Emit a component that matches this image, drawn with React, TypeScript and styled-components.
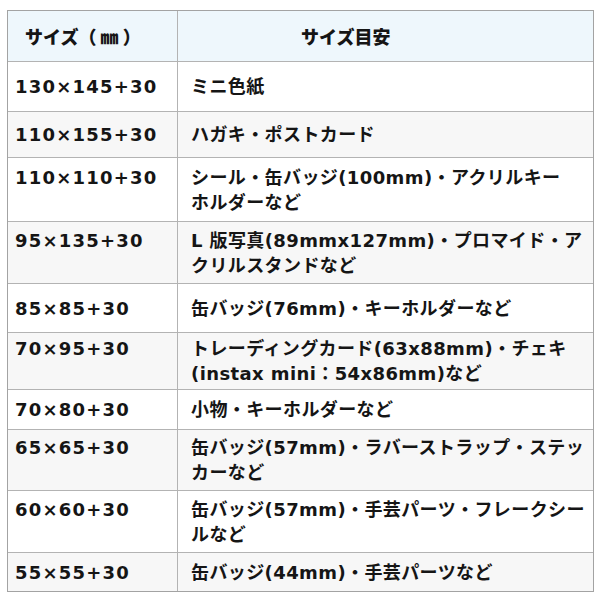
import styled, { createGlobalStyle } from "styled-components";

const GlobalStyle = createGlobalStyle`
  html, body {
    margin: 0;
    padding: 0;
    background: #ffffff;
  }
  body {
    font-family: "DejaVu Sans", "Noto Sans CJK JP", sans-serif;
    color: #151515;
  }
`;

const Page = styled.div`
  padding: 10px 6px 0 7px;
`;

const Table = styled.div`
  width: 587px;
  border: 1px solid #a3a3a3;
  box-sizing: border-box;
  display: flex;
  flex-direction: column;
`;

const Row = styled.div<{ $h: number; $tone: "head" | "white" | "gray" }>`
  display: grid;
  grid-template-columns: 169px 1fr;
  height: ${(p) => p.$h}px;
  box-sizing: border-box;
  border-bottom: 1px solid #b3b3b3;
  background: ${(p) =>
    p.$tone === "head" ? "#eef7fc" : p.$tone === "gray" ? "#f7f7f7" : "#ffffff"};
  &:last-child {
    border-bottom: none;
  }
`;

const HeadCell = styled.div<{ $pad: number }>`
  display: flex;
  align-items: center;
  padding-left: ${(p) => p.$pad}px;
  font-family: "Noto Sans CJK JP", sans-serif;
  font-weight: 900;
  font-size: 18px;
  & + & {
    border-left: 1px solid #b3b3b3;
  }
`;

const SizeCell = styled.div<{ $lines: number }>`
  display: flex;
  flex-direction: column;
  justify-content: center;
  padding: 0 0 ${(p) => (p.$lines - 1) * 25}px 7px;
  font-size: 18px;
  line-height: 25px;
  font-weight: 700;
  letter-spacing: 1.2px;
  white-space: nowrap;
`;

const NoteCell = styled.div`
  display: flex;
  flex-direction: column;
  justify-content: center;
  padding: 0 6px 0 13px;
  border-left: 1px solid #b3b3b3;
  font-size: 18px;
  line-height: 25px;
  font-weight: 700;
  letter-spacing: 0.4px;
`;

const Line = styled.span`
  display: block;
  white-space: nowrap;
`;

const rows: { size: string; note: string[]; h: number }[] = [
  { size: "130×145+30", note: ["ミニ色紙"], h: 50 },
  { size: "110×155+30", note: ["ハガキ・ポストカード"], h: 46 },
  { size: "110×110+30", note: ["シール・缶バッジ(100mm)・アクリルキー", "ホルダーなど"], h: 64 },
  { size: "95×135+30", note: ["L 版写真(89mmx127mm)・プロマイド・ア", "クリルスタンドなど"], h: 62 },
  { size: "85×85+30", note: ["缶バッジ(76mm)・キーホルダーなど"], h: 49 },
  { size: "70×95+30", note: ["トレーディングカード(63x88mm)・チェキ", "(instax mini：54x86mm)など"], h: 57 },
  { size: "70×80+30", note: ["小物・キーホルダーなど"], h: 40 },
  { size: "65×65+30", note: ["缶バッジ(57mm)・ラバーストラップ・ステッ", "カーなど"], h: 61 },
  { size: "60×60+30", note: ["缶バッジ(57mm)・手芸パーツ・フレークシー", "ルなど"], h: 62 },
  { size: "55×55+30", note: ["缶バッジ(44mm)・手芸パーツなど"], h: 38 },
];

const App = () => {
  return (
    <Page>
      <GlobalStyle />
      <Table>
        <Row $h={51} $tone="head">
          <HeadCell $pad={17}>サイズ（ ㎜ ）</HeadCell>
          <HeadCell $pad={123}>サイズ目安</HeadCell>
        </Row>
        {rows.map((r, i) => (
          <Row key={r.size + i} $h={r.h} $tone={i % 2 === 1 ? "gray" : "white"}>
            <SizeCell $lines={r.note.length}>{r.size}</SizeCell>
            <NoteCell>
              {r.note.map((t) => (
                <Line key={t}>{t}</Line>
              ))}
            </NoteCell>
          </Row>
        ))}
      </Table>
    </Page>
  );
};

export default App;
